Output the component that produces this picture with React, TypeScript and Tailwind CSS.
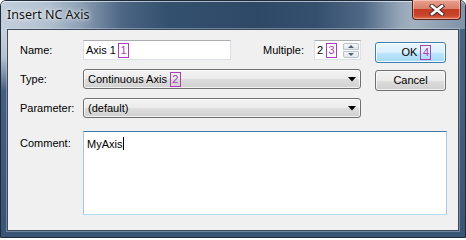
import React from "react";

function Tag({ n, className = "" }: { n: string; className?: string }) {
  return (
    <span
      className={`inline-flex h-[15px] w-[11px] items-center justify-center border border-[#a640b4] leading-none text-[#a640b4] ${className}`}
    >
      {n}
    </span>
  );
}

function DropArrow() {
  return (
    <svg width="8" height="5" viewBox="0 0 8 5" className="ml-auto">
      <path d="M0 0h8L4 4.5z" fill="#000" />
    </svg>
  );
}

function Combo({ children }: { children: React.ReactNode }) {
  return (
    <div className="flex h-[20px] flex-1 items-center rounded-[3px] border border-[#707070] bg-[linear-gradient(to_bottom,#f3f3f3_0%,#ebebeb_50%,#dddddd_51%,#d0d0d0_100%)] pl-[4px] pr-[4px] shadow-[inset_0_0_0_1px_rgba(255,255,255,0.7)]">
      {children}
      <DropArrow />
    </div>
  );
}

export default function App() {
  return (
    <div className="h-[238px] w-[466px] bg-white">
      <div className="flex h-[238px] w-[466px] flex-col rounded-t-[6px] border border-[#1d2b3b] bg-[radial-gradient(ellipse_40px_60px_at_0px_30px,#c9d3de_0%,#b3c0ce_45%,rgba(59,85,117,0)_100%),linear-gradient(to_bottom,#4a6685,#3a5474)] font-['Liberation_Sans',Arial,sans-serif] text-[11px] text-black">
        {/* Title bar */}
        <div className="flex h-[28px] shrink-0 rounded-t-[5px] bg-[linear-gradient(to_right,#c3cfdc_0%,#b2c1d1_10%,#8ea1b6_17%,#4c6684_26%,#33506f_36%,#2e4966_55%,#354f6e_68%,#4f6886_78%,#95a6b8_86%,#a3b1c1_89%,#7f92a8_100%)] shadow-[inset_0_1px_0_rgba(255,255,255,0.6)]">
          <span className="flex items-center pl-[6px] pt-[1px] font-['Noto_Sans','Open_Sans',sans-serif] text-[12.5px] text-[#111] [text-shadow:0_0_6px_rgba(255,255,255,0.9),0_0_3px_rgba(255,255,255,0.9)]">
            Insert NC Axis
          </span>
          <div className="ml-auto mr-[4px] mt-[-1px] flex h-[20px] w-[49px] items-center justify-center rounded-b-[4px] border border-t-0 border-[#5a2118] bg-[linear-gradient(to_bottom,#e9a090_0%,#d9806a_45%,#c23c22_50%,#c8442a_80%,#de6a50_100%)] shadow-[inset_0_0_0_1px_rgba(255,220,210,0.5)]">
            <svg width="16" height="12" viewBox="0 0 16 12">
              <path d="M3 2l10 8M13 2L3 10" stroke="#4a2a28" strokeWidth="4.5" strokeLinecap="square" />
              <path d="M3 2l10 8M13 2L3 10" stroke="#ffffff" strokeWidth="2.6" strokeLinecap="square" />
            </svg>
          </div>
        </div>

        {/* Client area */}
        <div className="mx-[6px] flex h-[202px] flex-col border border-[#3b4a5c] bg-[#f0f0f0] pl-[12px] pt-[10px] shadow-[0_0_0_1px_rgba(220,230,240,0.35)]">
          <div className="flex">
            <div className="flex w-[341px] flex-col gap-[9px]">
              <div className="flex h-[20px] items-center">
                <span className="w-[63px]">Name:</span>
                <div className="flex h-[20px] w-[148px] items-center border border-[#dbdfe6] border-t-[#abadb3] bg-white pl-[2px]">
                  Axis 1<Tag n="1" className="ml-[2px]" />
                </div>
                <span className="ml-auto mr-[10px]">Multiple:</span>
                <div className="flex h-[20px] w-[47px] items-center border border-[#dbdfe6] border-t-[#abadb3] bg-white pl-[2px]">
                  <span>2</span>
                  <Tag n="3" className="ml-[3px] w-[10px]" />
                  <div className="ml-auto mr-[1px] flex flex-col gap-px">
                    <div className="flex h-[7px] w-[16px] items-center justify-center rounded-t-[2px] border border-[#b9c3cf] bg-[linear-gradient(to_bottom,#f7f7f7,#e4e6e9)]">
                      <svg width="6" height="3" viewBox="0 0 6 3">
                        <path d="M0 3L3 0l3 3z" fill="#4c607e" />
                      </svg>
                    </div>
                    <div className="flex h-[7px] w-[16px] items-center justify-center rounded-b-[2px] border border-[#b9c3cf] bg-[linear-gradient(to_bottom,#f7f7f7,#e4e6e9)]">
                      <svg width="6" height="3" viewBox="0 0 6 3">
                        <path d="M0 0h6L3 3z" fill="#4c607e" />
                      </svg>
                    </div>
                  </div>
                </div>
              </div>
              <div className="flex h-[20px] items-center">
                <span className="w-[63px]">Type:</span>
                <Combo>
                  Continuous Axis<Tag n="2" className="ml-[3px]" />
                </Combo>
              </div>
              <div className="flex h-[20px] items-center">
                <span className="w-[63px]">Parameter:</span>
                <Combo>(default)</Combo>
              </div>
            </div>

            <div className="ml-[14px] flex flex-col gap-[7px] pt-[2px]">
              <div className="flex h-[21px] w-[71px] items-center justify-center rounded-[3px] border border-[#3c7fb1] bg-[linear-gradient(to_bottom,#eaf6fd_0%,#d9f0fc_50%,#bee6fd_51%,#a7d9f5_100%)] pl-[12px] shadow-[inset_0_0_0_1px_rgba(255,255,255,0.8)]">
                OK<Tag n="4" className="ml-[3px]" />
              </div>
              <div className="flex h-[21px] w-[71px] items-center justify-center rounded-[3px] border border-[#707070] bg-[linear-gradient(to_bottom,#f2f2f2_0%,#ebebeb_50%,#dddddd_51%,#cfcfcf_100%)] shadow-[inset_0_0_0_1px_rgba(255,255,255,0.7)]">
                Cancel
              </div>
            </div>
          </div>

          <div className="mt-[13px] flex">
            <span className="w-[63px] pt-[4px]">Comment:</span>
            <div className="h-[84px] w-[364px] border border-[#a4c9e3] border-b-[#b7d9ed] border-t-[#3d7bad] bg-white pl-[3px] pt-[3px]">
              <span>MyAxis</span>
              <span className="ml-px inline-block h-[13px] w-px translate-y-[2px] bg-black" />
            </div>
          </div>
        </div>
      </div>
    </div>
  );
}
